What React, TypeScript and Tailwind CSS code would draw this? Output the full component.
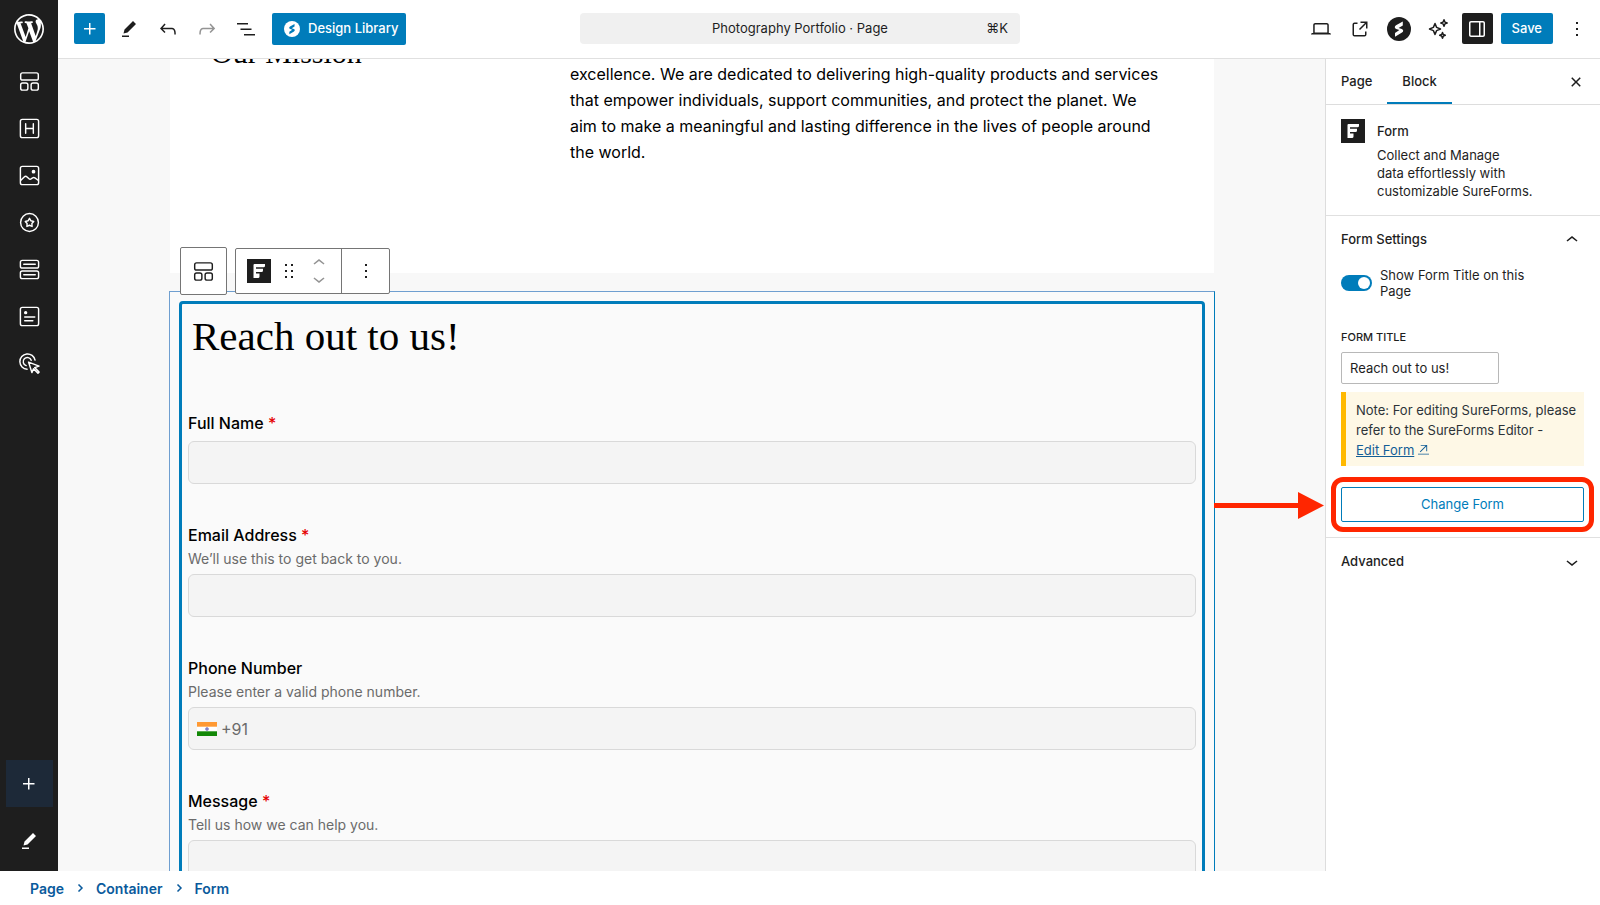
import React, { useState } from 'react';

const Icon: React.FC<{ d: string; size?: number; className?: string }> = ({ d, size = 24, className }) => (
  <svg width={size} height={size} viewBox="0 0 24 24" fill="currentColor" className={className} aria-hidden="true">
    <path d={d} />
  </svg>
);

const paths = {
  plus: 'M11 12.5V17.5H12.5V12.5H17.5V11H12.5V6H11V11H6V12.5H11Z',
  edit: 'm19 7-3-3-8.5 8.5-1 4 4-1L19 7Zm-7 11.5H5V20h7v-1.5Z',
  undo: 'M18.3 11.7c-.6-.6-1.4-.9-2.3-.9H6.7l2.9-3.3-1.1-1-4.5 5L8.5 16l1-1-2.7-2.7H16c.5 0 .9.2 1.3.5 1 1 1 3.4 1 4.5v.3h1.5v-.2c0-1.5 0-4.3-1.5-5.7z',
  redo: 'M15.6 6.5l-1.1 1 2.9 3.3H8c-.9 0-1.7.3-2.3.9-1.4 1.5-1.4 4.2-1.4 5.6v.2h1.5v-.3c0-1.1 0-3.5 1-4.5.3-.3.7-.5 1.3-.5h9.2L14.5 15l1.1 1.1 4.6-4.6-4.6-5z',
  listView: 'M3 6h11v1.5H3V6Zm3.5 5.5h11V13h-11v-1.5ZM21 17H10v1.5h11V17Z',
  laptop: 'M20.5 16h-.7V8c0-1.1-.9-2-2-2H6.2c-1.1 0-2 .9-2 2v8h-.7c-.8 0-1.5.7-1.5 1.5h20c0-.8-.7-1.5-1.5-1.5zM5.7 8c0-.3.2-.5.5-.5h11.6c.3 0 .5.2.5.5v7.6H5.7V8z',
  external: 'M19.5 4.5h-7V6h4.44l-5.97 5.97 1.06 1.06L18 7.06v4.44h1.5v-7Zm-13 1a2 2 0 0 0-2 2v10a2 2 0 0 0 2 2h10a2 2 0 0 0 2-2v-3H17v3a.5.5 0 0 1-.5.5h-10a.5.5 0 0 1-.5-.5v-10a.5.5 0 0 1 .5-.5h3V5.5h-3Z',
  drawer: 'M18 4H6c-1.1 0-2 .9-2 2v12c0 1.1.9 2 2 2h12c1.1 0 2-.9 2-2V6c0-1.1-.9-2-2-2zm-4 14.5H6c-.3 0-.5-.2-.5-.5V6c0-.3.2-.5.5-.5h8v13zm4.5-.5c0 .3-.2.5-.5.5h-2.5v-13H18c.3 0 .5.2.5.5v12z',
  more: 'M13 19h-2v-2h2v2zm0-6h-2v-2h2v2zm0-6h-2V5h2v2z',
  up: 'M6.5 12.4L12 8l5.5 4.4-.9 1.2L12 10l-4.5 3.6-1-1.2z',
  down: 'M17.5 11.6L12 16l-5.5-4.4.9-1.2L12 14l4.5-3.6 1 1.2z',
  close: 'M12 13.06l3.712 3.713 1.061-1.06L13.061 12l3.712-3.712-1.06-1.06L12 10.938 8.288 7.227l-1.061 1.06L10.939 12l-3.712 3.712 1.06 1.061L12 13.061z',
  drag: 'M8 5h2v2H8zM14 5h2v2h-2zM8 11h2v2H8zM14 11h2v2h-2zM8 17h2v2H8zM14 17h2v2h-2z',
  arrowNE: 'M6 2h14v14h-2V5.400L5.400 18 4 16.600 16.600 4H6zM0 21h24v2H0z',
};

const WordPressLogo: React.FC = () => (
  <svg width="36" height="36" viewBox="-2 -2 24 24" fill="currentColor" aria-hidden="true">
    <path d="M20 10c0-5.51-4.49-10-10-10C4.48 0 0 4.49 0 10c0 5.52 4.48 10 10 10 5.51 0 10-4.48 10-10zM7.78 15.37L4.37 6.22c.55-.02 1.17-.08 1.17-.08.5-.06.44-1.13-.06-1.11 0 0-1.45.11-2.37.11-.18 0-.37 0-.58-.01C4.12 2.69 6.87 1.11 10 1.11c2.33 0 4.45.87 6.05 2.34-.68-.11-1.65.39-1.65 1.58 0 .74.45 1.36.9 2.1.35.61.55 1.36.55 2.46 0 1.49-1.4 5-1.4 5l-3.03-8.37c.54-.02.82-.17.82-.17.5-.05.44-1.25-.06-1.22 0 0-1.44.12-2.38.12-.87 0-2.33-.12-2.33-.12-.5-.03-.56 1.2-.06 1.22l.92.08 1.26 3.41zM17.41 10c.24-.64.74-1.87.43-4.25.7 1.29 1.05 2.71 1.05 4.25 0 3.29-1.73 6.24-4.4 7.78.97-2.59 1.94-5.2 2.92-7.78zM6.1 18.09C3.12 16.65 1.11 13.53 1.11 10c0-1.3.23-2.48.72-3.59C3.25 10.3 4.67 14.2 6.1 18.09zm4.03-6.63l2.58 6.98c-.86.29-1.76.45-2.71.45-.79 0-1.57-.11-2.29-.33.81-2.38 1.62-4.74 2.42-7.1z" />
  </svg>
);

const OutlineIcon: React.FC<{ children: React.ReactNode; size?: number }> = ({ children, size = 23 }) => (
  <svg width={size} height={size} viewBox="0 0 24 24" fill="none" stroke="currentColor" strokeWidth="1.5" strokeLinejoin="round" strokeLinecap="round" aria-hidden="true">
    {children}
  </svg>
);

const ContainerIcon: React.FC = () => (
  <OutlineIcon>
    <rect x="2.8" y="3" width="18.400" height="7.500" rx="2" />
    <rect x="2.8" y="13.500" width="7.500" height="7.500" rx="2" />
    <rect x="13.700" y="13.500" width="7.500" height="7.500" rx="2" />
  </OutlineIcon>
);

const SpectraIcon: React.FC<{ size: number; className: string; mark: string }> = ({ size, className, mark }) => (
  <svg width={size} height={size} viewBox="0 0 24 24" className={className} aria-hidden="true">
    <circle cx="12" cy="12" r="12" fill="currentColor" />
    <path d="M15.800 4.500L9 8.300C7.300 9.400 7.400 11.400 9.200 12l3.200 1.100L8 16v3.700l7-4.100c1.700-1.100 1.600-3-.2-3.600l-3.200-1.100 4.200-2.500z" fill={mark} />
  </svg>
);

const SureFormsIcon: React.FC = () => (
  <svg width="24" height="24" viewBox="0 0 24 24" className="shrink-0" aria-hidden="true">
    <rect width="24" height="24" fill="#1e1e1e" />
    <path d="M7.500 5H18v1.800A1.500 1.500 0 0 1 16.500 8.300H9v1.500h7v1.600a1.500 1.500 0 0 1-1.500 1.500H9v1.500h3.500v3a1.500 1.500 0 0 1-1.500 1.500H6.500V6a1 1 0 0 1 1-1z" fill="#fff" />
  </svg>
);

const blocks = [
  { label: 'Container', icon: <ContainerIcon /> },
  {
    label: 'Heading',
    icon: (
      <OutlineIcon>
        <rect x="2.500" y="2.500" width="19" height="19" rx="2" />
        <path d="M8 7v10M16 7v10M8 12h8" />
      </OutlineIcon>
    ),
  },
  {
    label: 'Image',
    icon: (
      <OutlineIcon>
        <rect x="2.500" y="2.500" width="19" height="19" rx="2" />
        <path d="M3 17l3.500-3.500c1-1 2-1 3 0l2 2c.7.700 1.500.700 2.200 0l1.500-1c.8-.600 1.600-.600 2.400 0L21 17" />
        <circle cx="16.200" cy="8" r="1.200" fill="currentColor" />
      </OutlineIcon>
    ),
  },
  {
    label: 'Icon',
    icon: (
      <OutlineIcon>
        <circle cx="12" cy="12" r="9.300" />
        <path d="M12 7.700l1.500 2.500 2.900.7-1.900 2.200.2 3-2.700-1.200-2.700 1.200.2-3-1.900-2.200 2.900-.7z" />
      </OutlineIcon>
    ),
  },
  {
    label: 'Buttons',
    icon: (
      <OutlineIcon>
        <rect x="2.500" y="2.500" width="19" height="8" rx="2" />
        <rect x="2.500" y="13.500" width="19" height="8" rx="2" />
        <path d="M6 6.500h12M6 17.500h12" />
      </OutlineIcon>
    ),
  },
  {
    label: 'Info Box',
    icon: (
      <OutlineIcon>
        <rect x="2.500" y="2.500" width="19" height="19" rx="2" />
        <circle cx="8" cy="8" r="1" fill="currentColor" />
        <path d="M7 12.500h10.500M7 16.500h8.500" />
      </OutlineIcon>
    ),
  },
  {
    label: 'Call To Action',
    icon: (
      <OutlineIcon>
        <path d="M9.500 18a8 8 0 1 1 8.300-9.500" />
        <path d="M8.500 14.200a4.300 4.300 0 1 1 5.300-5.500" />
        <path d="M11 10.500l11 4.200-4.600 1.600L22 21l-1.200 1.200-4.600-4.700-1.700 4z" />
      </OutlineIcon>
    ),
  },
];

const Sidebar: React.FC = () => (
  <nav aria-label="Quick blocks" className="w-[58px] shrink-0 -mt-px bg-[#1e1e1e] text-white flex flex-col items-center">
    {blocks.map((b) => (
      <button key={b.label} type="button" aria-label={b.label} className="h-[47px] w-full flex items-center justify-center">
        {b.icon}
      </button>
    ))}
    <div className="mt-auto mb-[7px] flex flex-col items-center gap-2.5">
      <button type="button" aria-label="Add block" className="w-[47px] h-[47px] bg-[#1d2938] flex items-center justify-center">
        <Icon d={paths.plus} />
      </button>
      <button type="button" aria-label="Edit" className="w-[47px] h-[47px] flex items-center justify-center">
        <Icon d={paths.edit} />
      </button>
    </div>
  </nav>
);

const ToolButton: React.FC<{ label: string; children: React.ReactNode }> = ({ label, children }) => (
  <button type="button" aria-label={label} className="w-[31px] h-[31px] flex items-center justify-center">
    {children}
  </button>
);

const Header: React.FC = () => (
  <header className="h-[59px] shrink-0 grid grid-cols-[1fr_440px_1fr]">
    <div className="flex">
      <a href="#dashboard" aria-label="WordPress" className="w-[58px] pb-0.5 bg-[#1e1e1e] text-white flex items-center justify-center">
        <WordPressLogo />
      </a>
      <div className="flex-1 flex items-center gap-2 pl-4 pb-px border-b border-[#e0e0e0]">
        <button type="button" aria-label="Add block" className="w-[31px] h-[31px] rounded-xs bg-[#007cba] text-white flex items-center justify-center">
          <Icon d={paths.plus} />
        </button>
        <ToolButton label="Tools"><Icon d={paths.edit} /></ToolButton>
        <ToolButton label="Undo"><Icon d={paths.undo} /></ToolButton>
        <ToolButton label="Redo"><Icon d={paths.redo} className="text-[#949494]" /></ToolButton>
        <ToolButton label="Document overview"><Icon d={paths.listView} /></ToolButton>
        <button type="button" className="h-8 ml-[3px] pl-3 pr-2 rounded-xs bg-[#007cba] text-white text-[13px] font-medium flex items-center gap-2">
          <SpectraIcon size={16} className="text-white" mark="#007cba" />
          Design Library
        </button>
      </div>
    </div>
    <div className="flex items-center pb-px border-b border-[#e0e0e0]">
      <button type="button" className="w-full h-[31px] px-3 rounded-sm bg-[#f0f0f0] text-[13px] grid grid-cols-[1fr_auto_1fr] items-center">
        <span className="col-start-2">Photography Portfolio · Page</span>
        <span className="text-right">⌘K</span>
      </button>
    </div>
    <div className="flex items-center justify-end gap-2 pr-2 pb-px border-b border-[#e0e0e0]">
      <ToolButton label="View"><Icon d={paths.laptop} /></ToolButton>
      <ToolButton label="View page"><Icon d={paths.external} /></ToolButton>
      <ToolButton label="Spectra page settings"><SpectraIcon size={24} className="text-[#1e1e1e]" mark="#fff" /></ToolButton>
      <ToolButton label="AI assistant">
        <OutlineIcon size={24}>
          <path d="M9 6.500l1.600 3.900 3.900 1.600-3.900 1.600L9 17.500l-1.600-3.900L3.500 12l3.900-1.600z" />
          <path d="M18 2.800l.9 2.300 2.300.9-2.300.9-.9 2.300-.9-2.300-2.300-.9 2.300-.9zM16.500 15.500l.8 2 2 .8-2 .8-.8 2-.8-2-2-.8 2-.8z" />
        </OutlineIcon>
      </ToolButton>
      <button type="button" aria-label="Settings" className="w-[31px] h-[31px] rounded-xs bg-[#1e1e1e] text-white flex items-center justify-center">
        <Icon d={paths.drawer} />
      </button>
      <button type="button" className="h-[31px] px-[11px] rounded-xs bg-[#007cba] text-white text-[13px] font-medium">Save</button>
      <ToolButton label="Options"><Icon d={paths.more} /></ToolButton>
    </div>
  </header>
);

const IndiaFlag: React.FC = () => (
  <svg width="20" height="14" viewBox="0 0 20 14" aria-hidden="true">
    <rect width="20" height="14" fill="#fff" />
    <rect width="20" height="4.700" fill="#ff9933" />
    <rect y="9.300" width="20" height="4.700" fill="#128807" />
    <circle cx="10" cy="7" r="1.500" fill="#8888cc" stroke="#6666bb" strokeWidth="0.500" />
  </svg>
);

const Field: React.FC<{
  id: string;
  label: string;
  help?: string;
  required?: boolean;
  type?: string;
  multiline?: boolean;
}> = ({ id, label, help, required, type = 'text', multiline }) => {
  const box = 'w-full border border-[#d9d9d9] bg-[#f4f4f4] rounded-md outline-none';
  return (
    <div className="flex flex-col">
      <label htmlFor={id} className="text-[16px] leading-6 font-medium">
        {label} {required && <span className="text-[#e50000]">*</span>}
      </label>
      {help && <p className="text-[14px] leading-6 text-[#6b6b6b]">{help}</p>}
      <div className={help ? 'mt-[3px]' : 'mt-1.5'}>
        {multiline && <textarea id={id} className={`${box} block h-32 resize-none`} />}
        {!multiline && type === 'tel' && (
          <div className={`${box} h-[43px] flex items-center gap-1 px-2`}>
            <IndiaFlag />
            <input id={id} type="tel" defaultValue="+91" className="flex-1 text-[16px] text-[#6b6b6b] outline-none" />
          </div>
        )}
        {!multiline && type !== 'tel' && <input id={id} type={type} className={`${box} block h-[43px] px-2`} />}
      </div>
    </div>
  );
};

const BlockToolbar: React.FC = () => (
  <div className="absolute left-[10px] -top-[45px] flex items-center gap-2 text-[#1e1e1e]">
    <button type="button" aria-label="Select parent block" className="w-[47px] h-12 bg-white border border-[#757575] rounded-xs flex items-center justify-center">
      <ContainerIcon />
    </button>
    <div className="h-[46px] bg-white border border-[#757575] rounded-xs flex">
      <div className="w-[106px] pl-[11px] flex items-center gap-1.5 border-r border-[#757575]">
        <button type="button" aria-label="Form"><SureFormsIcon /></button>
        <button type="button" aria-label="Drag"><Icon d={paths.drag} /></button>
        <div className="flex flex-col text-[#949494]">
          <button type="button" aria-label="Move up" className="h-4 flex items-center"><Icon d={paths.up} /></button>
          <button type="button" aria-label="Move down" className="h-4 flex items-center"><Icon d={paths.down} /></button>
        </div>
      </div>
      <button type="button" aria-label="Options" className="w-[47px] flex items-center justify-center">
        <Icon d={paths.more} />
      </button>
    </div>
  </div>
);

const Canvas: React.FC = () => (
  <main className="flex-1 min-w-0 overflow-hidden bg-[#f8f8f8] pl-[111px] pr-[110px] text-black">
    <section className="h-[214px] mx-px bg-white flex pl-[41px] pr-12">
      <h2 className="w-[359px] shrink-0 -mt-6 text-[30px] leading-9 [font-family:'Liberation_Serif',serif]">Our Mission</h2>
      <p className="pt-0.5 text-[16px] leading-[26px]">
        excellence. We are dedicated to delivering high-quality products and services that empower individuals,
        support communities, and protect the planet. We aim to make a meaningful and lasting difference in the lives
        of people around the world.
      </p>
    </section>

    <section className="relative mt-[18px] p-[9px] border border-[#6f9fd0] border-r-[#007cba] bg-[#fafafa]">
      <BlockToolbar />
      <form className="border-[3px] border-[#007cba] rounded-sm px-1.5 pt-[5px] pb-10 flex flex-col" onSubmit={(e) => e.preventDefault()}>
        <h1 className="px-1 mb-12 text-[41px] leading-[54px] [font-family:'Liberation_Serif',serif]">Reach out to us!</h1>
        <div className="flex flex-col gap-[39px]">
          <Field id="name" label="Full Name" required />
          <Field id="email" label="Email Address" help="We’ll use this to get back to you." type="email" required />
          <Field id="phone" label="Phone Number" help="Please enter a valid phone number." type="tel" />
          <Field id="message" label="Message" help="Tell us how we can help you." multiline required />
        </div>
      </form>
      {/* Callout arrow towards the Change Form button */}
      <svg className="absolute left-full top-[200px]" width="110" height="27" viewBox="0 0 110 27" aria-hidden="true">
        <path d="M0 11h84V0l26 13.500L84 27V16H0z" fill="#ff2600" />
      </svg>
    </section>
  </main>
);

const SettingsPanel: React.FC = () => {
  const [showTitle, setShowTitle] = useState(true);
  const [title, setTitle] = useState('Reach out to us!');

  return (
    <aside className="w-[275px] shrink-0 border-l border-[#ddd] bg-white text-[13px]">
      <div className="h-[46px] flex border-b border-[#ddd]">
        <button type="button" className="px-[15px] font-medium">Page</button>
        <button type="button" className="px-[15px] pt-0.5 font-medium border-b-2 border-[#007cba]">Block</button>
        <button type="button" aria-label="Close settings" className="ml-auto mr-3"><Icon d={paths.close} /></button>
      </div>

      <div className="h-[111px] px-[15px] pt-[14px] flex gap-3 border-b border-[#e0e0e0]">
        <SureFormsIcon />
        <div>
          <h2 className="leading-6 font-medium">Form</h2>
          <p className="mt-[3px] leading-[18px]">
            Collect and Manage<br />
            data effortlessly with<br />
            customizable SureForms.
          </p>
        </div>
      </div>

      <div className="pl-[15px] pr-4 pb-[15px] border-b border-[#e0e0e0]">
        <button type="button" className="w-full h-12 flex items-center justify-between font-medium">
          Form Settings
          <Icon d={paths.up} />
        </button>
        <label className="mt-[3px] flex items-center gap-2 w-[200px] leading-4">
          <input type="checkbox" role="switch" className="peer sr-only" checked={showTitle} onChange={(e) => setShowTitle(e.target.checked)} />
          <span className="w-[31px] h-4 p-0.5 shrink-0 rounded-full flex bg-[#949494] peer-checked:bg-[#007cba] peer-checked:justify-end">
            <span className="w-3 h-3 rounded-full bg-white"></span>
          </span>
          <span>Show Form Title on this Page</span>
        </label>
        <label htmlFor="form-title" className="block mt-[30px] text-[11px] leading-4 font-medium uppercase">Form Title</label>
        <input
          id="form-title"
          value={title}
          onChange={(e) => setTitle(e.target.value)}
          className="mt-[7px] block w-[158px] h-8 px-2 border border-[#b8b8b8] rounded-xs outline-none"
        />
        <div className="mt-2 h-[74px] pl-[10px] pt-2 border-l-[5px] border-[#ffb900] bg-[#fef8e6] leading-5 text-[#2c3338]">
          Note: For editing SureForms, please refer to the SureForms Editor -<br />
          <a href="#edit-form" className="text-[#135e96] underline">Edit Form</a>{' '}
          <a href="#edit-form" aria-label="Open editor" className="inline-block text-[#135e96]"><Icon d={paths.arrowNE} size={11} /></a>
        </div>
        <div className="relative mt-[21px]">
          <button type="button" className="w-full h-[35px] border border-[#007cba] rounded-xs text-[#007cba]">Change Form</button>
          <div className="absolute -inset-[10px] border-[5px] border-[#ff2600] rounded-xl pointer-events-none"></div>
        </div>
      </div>

      <button type="button" className="w-full h-12 pl-[15px] pr-4 flex items-center justify-between font-medium">
        Advanced
        <Icon d={paths.down} />
      </button>
    </aside>
  );
};

const Breadcrumbs: React.FC = () => {
  const items = ['Page', 'Container', 'Form'];
  return (
    <footer className="h-[34px] shrink-0 px-[30px] bg-white flex items-center gap-3 text-[14px] font-semibold text-[#0a5a9c]">
      {items.map((item, idx) => (
        <React.Fragment key={item}>
          {idx > 0 && (
            <svg width="8" height="8" viewBox="0 0 8 8" fill="none" stroke="currentColor" strokeWidth="1.500" aria-hidden="true">
              <path d="M2.500 0.500L6 4 2.500 7.500" />
            </svg>
          )}
          <a href={`#${item.toLowerCase()}`}>{item}</a>
        </React.Fragment>
      ))}
    </footer>
  );
};

const App: React.FC = () => (
  <div className="h-screen flex flex-col bg-white text-[#1e1e1e] [font-family:Inter,'Liberation_Sans',sans-serif]">
    <Header />
    <div className="flex-1 min-h-0 flex">
      <Sidebar />
      <Canvas />
      <SettingsPanel />
    </div>
    <Breadcrumbs />
  </div>
);

export default App;
